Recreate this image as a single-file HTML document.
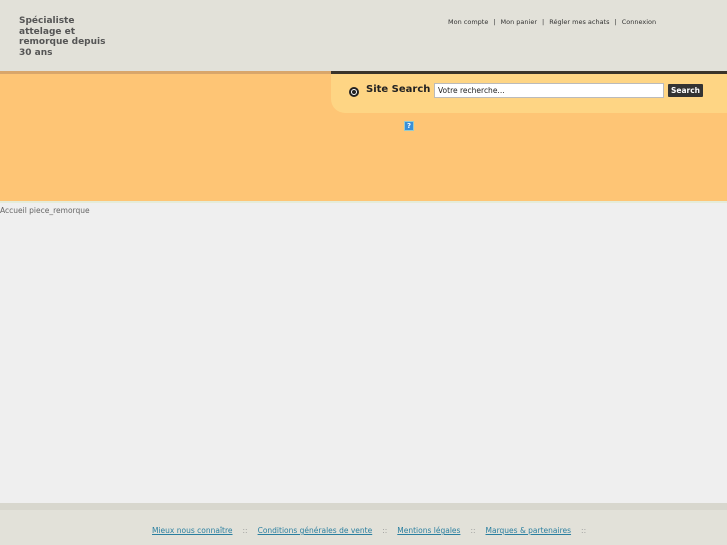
<!DOCTYPE html>
<html><head><meta charset="utf-8"><style>
*{margin:0;padding:0;box-sizing:border-box}
body{width:727px;height:545px;background:#efefef;font-family:"DejaVu Sans","Liberation Sans",sans-serif;position:relative;overflow:hidden}
.hdr{position:absolute;left:0;top:0;width:727px;height:71px;background:#e2e1d9}
.logo{position:absolute;left:19px;top:16px;font-size:9px;font-weight:bold;color:#555;line-height:10.5px;width:100px}
.nav{position:absolute;left:448px;top:18px;font-size:6.5px;color:#333;white-space:nowrap}
.nav span{margin:0 5px}
.band{position:absolute;left:0;top:71px;width:727px;height:130px;background:#fec575;border-top:3px solid #d9a66a}
.srch{position:absolute;left:331px;top:71px;width:396px;height:42px;background:#fed584;border-top:3px solid #3a342a;border-bottom-left-radius:14px}
.rad{position:absolute;left:18px;top:13px;width:10px;height:10px;border-radius:50%;border:2px solid #222;background:#fff}
.rad:after{content:"";position:absolute;left:1px;top:1px;width:4px;height:4px;border-radius:50%;background:#222}
.st{position:absolute;left:35px;top:10px;font-size:10px;font-weight:bold;color:#222}
.inp{position:absolute;left:103px;top:9px;width:230px;height:15px;background:#fff;border:1px solid #bbb;font-size:7.5px;padding:2px 3px;color:#222}
.btn{position:absolute;left:337px;top:10px;width:35px;height:13px;background:#333;color:#fff;font-size:7.5px;font-weight:bold;text-align:center;line-height:13px;border-radius:1px}
.q{position:absolute;left:404px;top:121px;width:10px;height:10px;background:#3a8fd8;border:1px solid #9cc;color:#fff;font-size:7px;text-align:center;line-height:9px;font-weight:bold}
.line{position:absolute;left:0;top:201px;width:727px;height:2px;background:#e5ecd9}
.bc{position:absolute;left:0;top:206px;font-size:7.5px;color:#666}
.ft1{position:absolute;left:0;top:503px;width:727px;height:7px;background:#d8d7ce}
.ft{position:absolute;left:0;top:510px;width:727px;height:35px;background:#e2e1d9}
.fl{position:absolute;top:16px;left:152px;font-size:7.5px;color:#2a7fa0;white-space:nowrap}
.fl a{color:#2a7fa0;text-decoration:underline}
.fl i{font-style:normal;color:#999;margin:0 10px}
</style></head><body>
<div class="hdr">
<div class="logo">Spécialiste<br>attelage et<br>remorque depuis<br>30 ans</div>
<div class="nav">Mon compte<span>|</span>Mon panier<span>|</span>Régler mes achats<span>|</span>Connexion</div>
</div>
<div class="band"></div>
<div class="srch"><div class="rad"></div><div class="st">Site Search</div><div class="inp">Votre recherche...</div><div class="btn">Search</div></div>
<div class="q">?</div>
<div class="line"></div>
<div class="bc">Accueil piece_remorque</div>
<div class="ft1"></div>
<div class="ft"><div class="fl"><a>Mieux nous connaître</a><i>::</i><a>Conditions générales de vente</a><i>::</i><a>Mentions légales</a><i>::</i><a>Marques &amp; partenaires</a><i>::</i></div></div>
</body></html>
